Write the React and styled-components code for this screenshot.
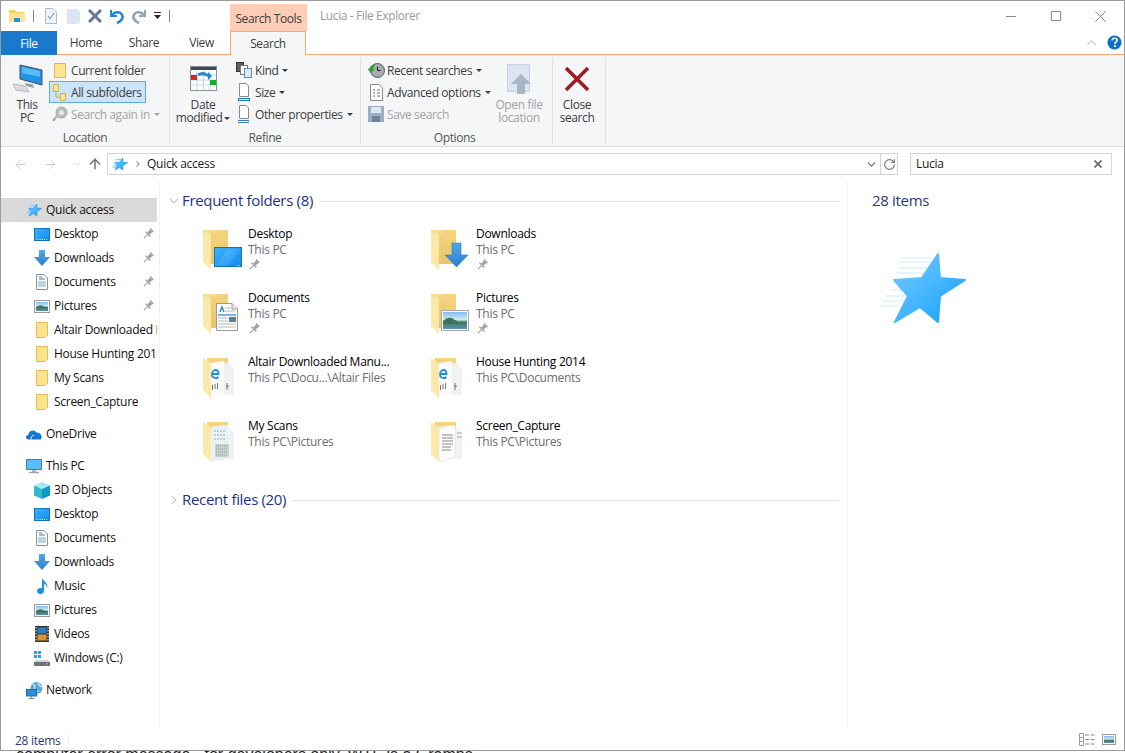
import React from "react";
import styled, { createGlobalStyle } from "styled-components";
import { ArrowLeft, ArrowRight, ArrowUp, ChevronDown, ChevronRight, ChevronUp, RotateCw } from "lucide-react";

const GlobalStyle = createGlobalStyle`
	html, body {
		margin: 0;
		padding: 0;
		background: #fff;
		overflow: hidden;
	}
	body {
		font-family: "Open Sans", "Noto Sans", sans-serif;
		font-size: 12px;
		letter-spacing: -0.28px;
		color: #1a1a1a;
	}
	* {
		box-sizing: border-box;
	}
	svg {
		display: block;
		flex: none;
	}
`;

const Page = styled.div`
	width: 1125px;
	height: 753px;
	display: flex;
	flex-direction: column;
	overflow: hidden;
`;

const Win = styled.div`
	height: 751px;
	flex: none;
	display: flex;
	flex-direction: column;
	background: #fff;
	border: 1px solid #9a9a9a;
`;

const BehindStrip = styled.div`
	height: 2px;
	overflow: hidden;
	background: #fff;
	font-family: "Liberation Sans", sans-serif;
	font-size: 16px;
	line-height: 8px;
	letter-spacing: 0;
	white-space: nowrap;
	padding-left: 16px;
	color: #222;
`;

/* title bar */
const TitleBar = styled.div`
	height: 30px;
	display: flex;
	flex: none;
	letter-spacing: -0.4px;
`;

const Qat = styled.div`
	width: 229px;
	display: flex;
	align-items: center;
	padding-left: 8px;
	height: 30px;
`;

const QatBtn = styled.div`
	width: ${(p) => p.$w || 22}px;
	display: flex;
	justify-content: center;
`;

const QatSep = styled.div`
	width: 1px;
	height: 12px;
	background: #8a8a8a;
	margin: 0 ${(p) => p.$mr || 0}px 0 ${(p) => p.$ml || 0}px;
`;

const ContextTab = styled.div`
	width: 77px;
	margin-top: 3px;
	background: #ffcdb6;
	color: #3c3c3c;
	display: flex;
	align-items: center;
	justify-content: center;
	padding-top: 2px;
`;

const WinTitle = styled.div`
	margin-left: 13px;
	color: #9b9b9b;
	line-height: 30px;
`;

const WinBtns = styled.div`
	margin-left: auto;
	margin-right: 1px;
	display: flex;
`;

const WinBtn = styled.div`
	width: 45px;
	height: 30px;
	display: flex;
	align-items: center;
	justify-content: center;
`;

/* tabs */
const TabBar = styled.div`
	height: 24px;
	flex: none;
	display: flex;
	align-items: stretch;
	border-bottom: 1px solid #f9a76f;
	letter-spacing: -0.4px;
`;

const FileTab = styled.div`
	width: 56px;
	background: #1979ca;
	color: #fff;
	display: flex;
	align-items: center;
	justify-content: center;
	margin-bottom: -1px;
`;

const Tab = styled.div`
	width: ${(p) => p.$w}px;
	display: flex;
	align-items: center;
	justify-content: center;
	color: #3c3c3c;
`;

const ActiveTab = styled.div`
	width: 76px;
	background: #f5f6f7;
	color: #3c3c3c;
	border: 1px solid #f9a76f;
	border-bottom: none;
	margin-bottom: -1px;
	display: flex;
	align-items: center;
	justify-content: center;
`;

const TabTools = styled.div`
	margin-left: auto;
	display: flex;
	align-items: center;
	padding-right: 2px;
	gap: 8px;
`;

/* ribbon */
const Ribbon = styled.div`
	height: 92px;
	flex: none;
	display: flex;
	background: #f5f6f7;
	border-bottom: 1px solid #dadbdc;
	padding-top: 2px;
	color: #3c3c3c;
	letter-spacing: -0.4px;
`;

const Group = styled.div`
	width: ${(p) => p.$w}px;
	height: 87px;
	display: flex;
	flex-direction: column;
	border-right: 1px solid #e2e3e4;
`;

const GroupBody = styled.div`
	flex: 1;
	display: flex;
	padding-left: ${(p) => p.$pl || 0}px;
	padding-top: 2px;
`;

const GroupLabel = styled.div`
	text-align: center;
	line-height: 16px;
	margin-bottom: -2px;
	color: #555;
	padding-right: ${(p) => p.$pr || 0}px;
`;

const BigBtn = styled.div`
	width: ${(p) => p.$w}px;
	flex: none;
	display: flex;
	flex-direction: column;
	align-items: center;
	text-align: center;
	line-height: 13px;
	color: ${(p) => (p.$off ? "#a3a3a3" : "inherit")};
`;

const BigIcon = styled.div`
	height: 39px;
	display: flex;
	align-items: center;
	justify-content: center;
`;

const RowCol = styled.div`
	width: ${(p) => p.$w}px;
	flex: none;
	margin-left: ${(p) => p.$ml || 0}px;
	display: flex;
	flex-direction: column;
`;

const SmallRow = styled.div`
	height: 22px;
	display: flex;
	align-items: center;
	gap: 2px;
	padding-left: 2px;
	white-space: nowrap;
	color: ${(p) => (p.$off ? "#a3a3a3" : "inherit")};
	width: ${(p) => (p.$sel ? "97px" : "auto")};
	background: ${(p) => (p.$sel ? "#cce4f7" : "transparent")};
	outline: ${(p) => (p.$sel ? "1px solid #62a8e0" : "none")};
	outline-offset: -1px;
`;

const RowIcon = styled.div`
	width: 18px;
	flex: none;
	display: flex;
	justify-content: center;
`;

const Caret = styled.span`
	display: inline-block;
	width: 0;
	height: 0;
	border: 3px solid transparent;
	border-top: 3px solid ${(p) => (p.$off ? "#a3a3a3" : "#3c3c3c")};
	border-bottom: none;
	margin-left: 2px;
	vertical-align: 2px;
`;

/* address row */
const AddressRow = styled.div`
	height: 35px;
	flex: none;
	display: flex;
	padding-top: 6px;
	padding-left: 12px;
	align-items: flex-start;
`;

const NavArrows = styled.div`
	width: 94px;
	height: 22px;
	display: flex;
	align-items: center;
`;

const ArrowBox = styled.div`
	width: ${(p) => p.$w}px;
	display: flex;
	justify-content: ${(p) => p.$j || "flex-start"};
`;

const AddressBox = styled.div`
	width: 791px;
	height: 22px;
	border: 1px solid #d5d5d5;
	display: flex;
	align-items: center;
	padding-left: 4px;
	color: #1a1a1a;
`;

const Crumb = styled.span`
	margin-left: 4px;
	padding-bottom: 2px;
`;

const BoxEnd = styled.div`
	margin-left: auto;
	display: flex;
	align-items: center;
	height: 100%;
`;

const BoxCell = styled.div`
	width: ${(p) => p.$w}px;
	height: 100%;
	display: flex;
	align-items: center;
	justify-content: center;
	border-left: ${(p) => (p.$line ? "1px solid #d5d5d5" : "none")};
`;

const SearchBox = styled.div`
	width: 202px;
	height: 22px;
	margin-left: 12px;
	border: 1px solid #d5d5d5;
	display: flex;
	align-items: center;
	justify-content: space-between;
	padding: 0 9px 0 5px;
	color: #1a1a1a;
`;

const SearchText = styled.span`
	padding-bottom: 2px;
`;

/* main area */
const Main = styled.div`
	flex: 1;
	min-height: 0;
	display: flex;
`;

const NavPane = styled.div`
	width: 159px;
	flex: none;
	border-right: 1px solid #f0f0f0;
	padding: 16px 2px 0 0;
`;

const NavRow = styled.div`
	height: 24px;
	display: flex;
	align-items: center;
	gap: 2px;
	padding-left: ${(p) => (p.$child ? 31 : 23)}px;
	background: ${(p) => (p.$sel ? "#d9d9d9" : "transparent")};
	margin-top: ${(p) => (p.$gap ? 8 : 0)}px;
	color: #111;
`;

const NavIcon = styled.div`
	width: 20px;
	flex: none;
	display: flex;
	justify-content: center;
`;

const NavLabel = styled.div`
	flex: 1;
	min-width: 0;
	overflow: hidden;
	white-space: nowrap;
	padding-bottom: 2px;
`;

const PinBox = styled.div`
	width: 15px;
	flex: none;
`;

const Content = styled.div`
	width: 687px;
	flex: none;
	padding: 8px 8px 0;
`;

const SectionHead = styled.div`
	height: 22px;
	display: flex;
	align-items: center;
	margin-top: ${(p) => p.$mt || 0}px;
`;

const SectionTitle = styled.div`
	font-size: 15px;
	letter-spacing: -0.33px;
	color: #1e3287;
	white-space: nowrap;
	margin-left: 3px;
	padding: 0 6px 2px 0;
`;

const SectionLine = styled.div`
	flex: 1;
	height: 1px;
	background: #e2e2e2;
`;

const ChevBox = styled.div`
	width: 11px;
	display: flex;
	justify-content: center;
`;

const Tiles = styled.div`
	display: grid;
	grid-template-columns: 228px 228px;
	grid-auto-rows: 64px;
	margin: 12px 0 0 35px;
`;

const Tile = styled.div`
	display: flex;
	padding-top: 1px;
`;

const TileIcon = styled.div`
	width: 45px;
	flex: none;
	padding-top: 4px;
`;

const TileText = styled.div`
	line-height: 16px;
	white-space: nowrap;
	padding-top: 1px;
`;

const TileName = styled.div`
	color: #000;
`;

const TileSub = styled.div`
	color: #6d6d6d;
`;

const TilePin = styled.div`
	padding-top: 1px;
`;

const Details = styled.div`
	flex: 1;
	border-left: 1px solid #f0f0f0;
	padding: 7px 0 0 24px;
`;

const DetailsCount = styled.div`
	font-size: 15px;
	letter-spacing: -0.33px;
	line-height: 22px;
	color: #2b3a6e;
`;

const DetailsStar = styled.div`
	margin: 41px 0 0 6px;
`;

/* status bar */
const StatusBar = styled.div`
	height: 22px;
	flex: none;
	display: flex;
	align-items: center;
	padding: 0 5px 0 14px;
	color: #2b3a6e;
`;

const StatusText = styled.span`
	padding-top: 2px;
`;

const StatusSep = styled.div`
	width: 1px;
	height: 10px;
	background: #ececec;
	margin-left: 8px;
`;

const StatusIcons = styled.div`
	margin-left: auto;
	display: flex;
	align-items: center;
	gap: 7px;
	padding-right: 3px;
`;

/* drawn icons */
const Defs = () => (
	<svg width="0" height="0" style={{ position: "absolute" }}>
		<defs>
			<linearGradient id="blueGrad" x1="0" y1="0" x2="1" y2="1">
				<stop offset="0" stopColor="#7accff" />
				<stop offset="1" stopColor="#12a0ff" />
			</linearGradient>
			<linearGradient id="screenGrad" x1="0" y1="0" x2="1" y2="1">
				<stop offset="0" stopColor="#3fb2fb" />
				<stop offset="1" stopColor="#0e8bf0" />
			</linearGradient>
			<linearGradient id="folderBack" x1="0" y1="0" x2="0" y2="1">
				<stop offset="0" stopColor="#f3d57f" />
				<stop offset="1" stopColor="#e9c566" />
			</linearGradient>
			<linearGradient id="photoGrad" x1="0" y1="0" x2="0" y2="1">
				<stop offset="0" stopColor="#7fbdf0" />
				<stop offset="0.45" stopColor="#d5e8f4" />
				<stop offset="0.6" stopColor="#3f7a5c" />
				<stop offset="1" stopColor="#5b8fb8" />
			</linearGradient>
			<linearGradient id="arrowGrad" x1="0" y1="0" x2="0" y2="1">
				<stop offset="0" stopColor="#4ea6ea" />
				<stop offset="1" stopColor="#2a80d2" />
			</linearGradient>
		</defs>
	</svg>
);

const StarPoints = "68,15 70,39 95,41 70,57 68,83 50,68 25,83 38,57 24,41 52,39";

const StarLarge = () => (
	<svg width="90" height="74" viewBox="8 13 90 74">
		<g stroke="#cfe9fb" strokeWidth="1.2">
			<path d="M33 19H62M30 23H60M28 29H58M26 34H55" />
			<path d="M20 51H38M15 57H36M12 62H34M10 67H30" />
		</g>
		<polygon points={StarPoints} fill="url(#blueGrad)" stroke="url(#blueGrad)" strokeWidth="2" strokeLinejoin="round" />
	</svg>
);

const StarSmall = () => (
	<svg width="16" height="14" viewBox="8 12 90 74">
		<path d="M28 25H60M16 55H38M12 66H32" stroke="#8ecdf7" strokeWidth="7" />
		<polygon points={StarPoints} fill="url(#blueGrad)" stroke="#2a9cf0" strokeWidth="4" strokeLinejoin="round" />
	</svg>
);

const PinIcon = ({ size = 12 }) => (
	<svg width={size} height={size} viewBox="0 0 12 12">
		<g transform="rotate(45 6 6)" fill="#9aa1a8">
			<rect x="3.6" y="0" width="4.8" height="1.4" />
			<rect x="4.4" y="1.4" width="3.2" height="4" />
			<rect x="2.6" y="5.4" width="6.8" height="1.4" />
			<rect x="5.4" y="6.8" width="1.2" height="5" />
		</g>
	</svg>
);

const FolderBase = () => (
	<>
		<rect x="4" y="1" width="21" height="34" fill="url(#folderBack)" />
		<polygon points="0,1 8,6 8,41 0,33" fill="#fce9a9" />
		<rect x="0" y="1" width="12" height="3" fill="#f5dc8e" />
	</>
);

const DesktopFolder = () => (
	<svg width="45" height="42" viewBox="0 0 45 42">
		<FolderBase />
		<rect x="11.5" y="18.5" width="27" height="19" fill="url(#screenGrad)" stroke="#0f74c4" />
		<path d="M14 36L24 20H36L26 36Z" fill="#fff" opacity="0.1" />
		<path d="M34 36.5H38" stroke="#fff" strokeDasharray="1 1" />
	</svg>
);

const DownloadsFolder = () => (
	<svg width="45" height="42" viewBox="0 0 45 42">
		<FolderBase />
		<path d="M21 14H30V26H37L25.5 38L14 26H21Z" fill="url(#arrowGrad)" stroke="#2a78c8" strokeWidth="0.6" />
	</svg>
);

const DocPage = () => (
	<g>
		<path d="M13.5 10.5H29L34.5 16V37.5H13.5Z" fill="#fff" stroke="#9a9a9a" />
		<path d="M29 10.5V16H34.5" fill="#e8e8e8" stroke="#9a9a9a" />
		<path d="M17 19L19 14L21 19" fill="none" stroke="#2a80d2" strokeWidth="1.4" />
		<path d="M22 15H28M22 18H32" stroke="#b0b8c0" />
		<path d="M15 22H33" stroke="#2a80d2" strokeWidth="1.2" />
		<path d="M15 25H25M15 28H25M15 31H33M15 34H33" stroke="#b8b8b8" />
		<rect x="26" y="24" width="7" height="5" fill="#5f7f90" />
	</g>
);

const DocumentsFolder = () => (
	<svg width="45" height="42" viewBox="0 0 45 42">
		<FolderBase />
		<DocPage />
	</svg>
);

const PicturesFolder = () => (
	<svg width="45" height="42" viewBox="0 0 45 42">
		<FolderBase />
		<rect x="10.5" y="17.5" width="27" height="20" fill="#fff" stroke="#a6a6a6" />
		<rect x="12" y="19" width="24" height="17" fill="url(#photoGrad)" />
		<path d="M12 28Q18 22 24 27T36 30V31H12Z" fill="#3c7458" />
	</svg>
);

const ThumbFolder = ({ kind }) => (
	<svg width="45" height="42" viewBox="0 0 45 42">
		<rect x="4" y="1" width="21" height="33" fill="url(#folderBack)" />
		<polygon points="20,5 26,7 31,12 31,38 20,37" fill="#f1f1f1" />
		<polygon points="8,6 21,4 21,38 8,41" fill="#fbfbfb" />
		<polygon points="0,1 8,6 8,41 0,33" fill="#fce9a9" />
		{kind === "web" && (
			<g>
				<path d="M9.5 17H15.5C15.5 14.5 14 13 12.5 13C10.5 13 9 15 9 17.5C9 20 11 21 13 21C14 21 15 20.5 15.5 20" fill="none" stroke="#1d8fe0" strokeWidth="1.8" />
				<path d="M9.5 28V33M12 27V32M14.5 26V32M24 26V33" stroke="#777" />
				<path d="M23 29H26" stroke="#777" />
			</g>
		)}
		{kind === "scan" && (
			<g>
				<polygon points="8,6 25,4 25,38 8,41" fill="#e6f2f4" />
				<path d="M11 10H23M11 14H23M11 18H23" stroke="#9aa8b0" strokeDasharray="2 1" />
				<rect x="12" y="23" width="14" height="13" fill="#c8d0d0" />
				<path d="M13 25H25M13 28H25M13 31H25M13 34H25" stroke="#909a9e" strokeDasharray="1 1" />
			</g>
		)}
		{kind === "page" && (
			<g>
				<polygon points="8,8 24,4 24,36 8,41" fill="#fdfdfd" stroke="#ddd" strokeWidth="0.5" />
				<path d="M11 14H22M11 17H22M11 20H22M11 23H22M11 26H20M11 29H20" stroke="#8a8a8a" />
				<path d="M26 12H31M26 16H31" stroke="#aaa" />
			</g>
		)}
	</svg>
);

const NavDesktop = () => (
	<svg width="16" height="13" viewBox="0 0 16 13">
		<rect x="0.5" y="0.5" width="15" height="12" fill="url(#screenGrad)" stroke="#0f74c4" />
		<path d="M2 11.5H14" stroke="#cfe8fb" strokeDasharray="1 1" />
	</svg>
);

const NavDownloads = () => (
	<svg width="16" height="16" viewBox="0 0 16 16">
		<path d="M5 0H11V7H16L8 16L0 7H5Z" fill="url(#arrowGrad)" />
	</svg>
);

const NavDocuments = ({ w = 12 }) => (
	<svg width={w} height="16" viewBox="0 0 12 16">
		<path d="M0.5 0.5H8L11.5 4V15.5H0.5Z" fill="#fff" stroke="#8f8f8f" />
		<path d="M3 3H6M3 5H9" stroke="#2a80d2" />
		<path d="M2 8H10M2 10H10M2 12H10" stroke="#7ea4c4" />
	</svg>
);

const NavPictures = () => (
	<svg width="16" height="13" viewBox="0 0 16 13">
		<rect x="0.5" y="0.5" width="15" height="12" fill="#fff" stroke="#9a9a9a" />
		<rect x="2" y="2" width="12" height="9" fill="url(#photoGrad)" />
		<path d="M2 7Q6 4 9 6T14 7V8H2Z" fill="#3c7458" />
	</svg>
);

const NavFolder = () => (
	<svg width="12" height="16" viewBox="0 0 12 16">
		<path d="M0.5 0.5H11.5V13L9 15.5H0.5Z" fill="#ffe28c" stroke="#e0bd52" />
		<path d="M9.5 13V15.5L11.5 13Z" fill="#f0cf6e" />
	</svg>
);

const NavOneDrive = () => (
	<svg width="16" height="11" viewBox="0 0 16 11">
		<path d="M2.5 10.5C0.8 10.5 0 9.3 0 8.2C0 7 .9 6 2.2 5.9C2.6 3.4 4.5 1.5 6.8 1.5C8.3 1.5 9.6 2.3 10.3 3.5C12.8 3.2 15 4.7 15.4 7C16.2 8.6 15.2 10.5 13.4 10.5Z" fill="#1277c9" />
		<path d="M5 10.5C4.6 8.4 6 6.6 8 6.3" fill="none" stroke="#fff" strokeWidth="1" />
	</svg>
);

const NavThisPc = () => (
	<svg width="16" height="15" viewBox="0 0 16 15">
		<rect x="0.5" y="0.5" width="15" height="10" fill="#56bdf7" stroke="#4a7ea8" />
		<path d="M6 11H10V13H6Z" fill="#a8b8c4" />
		<path d="M3 13.5H13" stroke="#8fa2b2" strokeWidth="1.4" />
	</svg>
);

const Nav3D = () => (
	<svg width="16" height="17" viewBox="0 0 16 17">
		<polygon points="8,0 16,3.5 8,7 0,3.5" fill="#9eeaf0" />
		<polygon points="0,3.5 8,7 8,17 0,13.5" fill="#2fbcd0" />
		<polygon points="16,3.5 8,7 8,17 16,13.5" fill="#1098c4" />
	</svg>
);

const NavMusic = () => (
	<svg width="11" height="16" viewBox="0 0 11 16">
		<ellipse cx="3.5" cy="13" rx="3.4" ry="3" fill="#1e90e8" />
		<path d="M5 13V0C6 3 11 4.5 10.5 10C9.6 7 8 6 7 5.5V13Z" fill="#1e90e8" />
	</svg>
);

const NavVideos = () => (
	<svg width="14" height="16" viewBox="0 0 14 16">
		<rect width="14" height="16" fill="#333" />
		<path d="M1 1V15M13 1V15" stroke="#ddd" strokeWidth="1.2" strokeDasharray="1.5 1.5" />
		<rect x="2.5" y="1.5" width="9" height="6" fill="#2a80c8" />
		<rect x="2.5" y="8.5" width="9" height="6" fill="#d89a30" />
	</svg>
);

const NavDrive = () => (
	<svg width="16" height="15" viewBox="0 0 16 15">
		<rect x="0" y="0" width="3" height="3" fill="#1ea5ee" />
		<rect x="4" y="0" width="3" height="3" fill="#1ea5ee" />
		<rect x="0" y="4" width="3" height="3" fill="#1ea5ee" />
		<rect x="4" y="4" width="3" height="3" fill="#1ea5ee" />
		<polygon points="2,9 14,9 16,11 0,11" fill="#d2d6d8" />
		<rect x="0" y="11" width="16" height="4" fill="#6f7478" />
		<rect x="12" y="12" width="2" height="1.4" fill="#49e05a" />
	</svg>
);

const NavNetwork = () => (
	<svg width="17" height="17" viewBox="0 0 17 17">
		<circle cx="10.5" cy="6" r="6" fill="#5aa5e0" />
		<path d="M7 2Q10 4 8 7T13 9M12 1Q13 4 16 5" fill="none" stroke="#d6ecfa" strokeWidth="1.2" />
		<rect x="0.5" y="7.5" width="10" height="6.5" fill="#2f8fdc" stroke="#24689e" />
		<path d="M5.5 14V16.5M2.5 16.5H8.5" stroke="#7a8c9a" />
	</svg>
);

const RibbonPc = () => (
	<svg width="32" height="30" viewBox="0 0 32 30">
		<polygon points="9,1 31,6 31,21 9,15" fill="#1f94e8" stroke="#4a4f55" />
		<polygon points="11,3 29,7 29,13 11,9" fill="#58baf6" />
		<polygon points="14,19 22,20.5 23,24 15,22" fill="#9aa0a6" />
		<polygon points="2,20 14,22 18,28 5,26" fill="#dadcdf" stroke="#b6b9bd" />
	</svg>
);

const RibbonFolder = () => (
	<svg width="12" height="15" viewBox="0 0 12 15">
		<path d="M0.5 0.5H11.5V14.5H0.5Z" fill="#ffe491" stroke="#dcb84e" />
	</svg>
);

const RibbonSubfolders = () => (
	<svg width="14" height="17" viewBox="0 0 14 17">
		<path d="M0.5 0.5H5.5V7.5H0.5Z" fill="#ffe491" stroke="#d3ae42" />
		<path d="M7.5 9.5H12.5V16.5H7.5Z" fill="#ffe491" stroke="#d3ae42" />
		<path d="M3 8V13H7" fill="none" stroke="#c9a94a" />
	</svg>
);

const RibbonSearchAgain = () => (
	<svg width="16" height="16" viewBox="0 0 16 16">
		<circle cx="9.5" cy="6.5" r="5.5" fill="#bcbcbc" stroke="#a3a3a3" />
		<circle cx="9.5" cy="6.5" r="2.5" fill="#e8e8e8" />
		<path d="M5 10L1 15" stroke="#b2b2b2" strokeWidth="2.5" />
	</svg>
);

const RibbonCalendar = () => (
	<svg width="27" height="25" viewBox="0 0 27 25">
		<rect x="0.5" y="0.5" width="26" height="24" fill="#fff" stroke="#8a8f94" />
		<rect x="1" y="1" width="25" height="3" fill="#3e4a54" />
		<path d="M1 9H26M1 14H26M1 19H26M7 5V24M13.5 5V24M20 5V24" stroke="#bcd6e8" />
		<rect x="1" y="9" width="6" height="5" fill="#d8261f" />
		<rect x="20" y="14" width="6" height="5" fill="#12b02c" />
		<path d="M7 8Q13 4 18 8V6L22 10L18 14V11Q13 8 9 10Z" fill="#2a86d4" />
	</svg>
);

const RibbonKind = () => (
	<svg width="16" height="16" viewBox="0 0 16 16">
		<rect x="0.5" y="0.5" width="7" height="9" fill="#5a6066" stroke="#333" />
		<rect x="4.5" y="3.5" width="7" height="9" fill="#fff" stroke="#777" />
		<rect x="8.5" y="6.5" width="7" height="9" fill="#d8ecfa" stroke="#6f8ba3" />
	</svg>
);

const RibbonPageLine = ({ thin }) => (
	<svg width="12" height="18" viewBox="0 0 12 18">
		<path d="M1.5 0.5H8L10.5 3V13.5H1.5Z" fill="#fff" stroke="#8a8a8a" />
		{thin ? (
			<path d="M0 15.5H11M0 17.5H11" stroke="#3a7cc2" />
		) : (
			<g>
				<path d="M0 15.5H11" stroke="#1e7ac8" strokeWidth="1" />
				<rect x="0.5" y="15.5" width="11" height="2" fill="#d6e8f6" stroke="#1e7ac8" />
			</g>
		)}
	</svg>
);

const RibbonRecent = () => (
	<svg width="17" height="15" viewBox="0 0 17 15">
		<circle cx="9.5" cy="7.5" r="7" fill="#a8acb0" stroke="#55595d" />
		<path d="M9.5 3.5V7.5H12.5" fill="none" stroke="#222" />
		<path d="M0 6L3 9.5L6 6H4.5C5 3 7 2 7 2C4 2 2 3.5 1.6 6Z" fill="#2ca52e" stroke="#1f7d22" strokeWidth="0.5" />
	</svg>
);

const RibbonAdvanced = () => (
	<svg width="13" height="17" viewBox="0 0 13 17">
		<path d="M0.5 0.5H9L12.5 4V16.5H0.5Z" fill="#fff" stroke="#8a8a8a" />
		<path d="M3 6H5M7 6H10M3 9H5M7 9H10M3 12H5M7 12H10" stroke="#6a6a6a" />
	</svg>
);

const RibbonSave = () => (
	<svg width="16" height="16" viewBox="0 0 16 16">
		<rect width="16" height="16" fill="#9aaec6" />
		<rect x="3" y="1" width="10" height="6" fill="#dfe6ee" />
		<rect x="4" y="10" width="8" height="6" fill="#6f8299" />
	</svg>
);

const RibbonOpenLocation = () => (
	<svg width="25" height="30" viewBox="0 0 25 30">
		<rect x="0.5" y="0.5" width="22" height="27" fill="#dbe5f1" stroke="#c6d2e2" />
		<path d="M14 10L24 20H18V30H10V20H4Z" fill="#a6b4c4" />
	</svg>
);

const RibbonClose = () => (
	<svg width="26" height="26" viewBox="0 0 26 26">
		<path d="M2 2L24 24M24 2L2 24" stroke="#9e1c22" strokeWidth="3.6" />
	</svg>
);

const QatFolder = () => (
	<svg width="17" height="14" viewBox="0 0 17 14">
		<path d="M0 1H6L8 3H15V13H0Z" fill="#f4cf6b" />
		<rect x="0" y="4" width="16" height="9" fill="#ffe390" />
		<rect x="5" y="9" width="6" height="4" fill="#2093e0" />
	</svg>
);

const QatProps = () => (
	<svg width="12" height="16" viewBox="0 0 12 16">
		<path d="M0.5 0.5H8L11.5 4V15.5H0.5Z" fill="#edf3f9" stroke="#aebcce" />
		<path d="M3 8L5 10.5L9 5" fill="none" stroke="#8aa0b8" strokeWidth="1.2" />
	</svg>
);

const QatNew = () => (
	<svg width="13" height="15" viewBox="0 0 13 15">
		<path d="M0 0H10L13 3V15H0Z" fill="#dbe5f1" />
		<path d="M10 12V15H13Z" fill="#f5f5f5" />
	</svg>
);

const QatX = () => (
	<svg width="14" height="14" viewBox="0 0 14 14">
		<path d="M1 1L13 13M13 1L1 13" stroke="#64799a" strokeWidth="3" />
	</svg>
);

const QatUndo = ({ color, flip }) => (
	<svg width="14" height="15" viewBox="0 0 14 15" style={flip ? { transform: "scaleX(-1)" } : undefined}>
		<path d="M1 1V7H7" fill="none" stroke={color} strokeWidth="2.2" />
		<path d="M2 6.5C4 3 9 2 11.5 5C14 8 12 12 7 14" fill="none" stroke={color} strokeWidth="2.6" />
	</svg>
);

const QatMore = () => (
	<svg width="8" height="8" viewBox="0 0 8 8">
		<path d="M0 0.5H7" stroke="#222" />
		<path d="M0 3H7L3.5 7Z" fill="#222" />
	</svg>
);

const WinMin = () => (
	<svg width="10" height="10" viewBox="0 0 10 10">
		<path d="M0 5.5H10" stroke="#8a8a8a" />
	</svg>
);

const WinMax = () => (
	<svg width="10" height="10" viewBox="0 0 10 10">
		<rect x="0.5" y="0.5" width="9" height="9" fill="none" stroke="#8a8a8a" />
	</svg>
);

const ThinX = () => (
	<svg width="11" height="11" viewBox="0 0 11 11">
		<path d="M0.5 0.5L10.5 10.5M10.5 0.5L0.5 10.5" stroke="#8a8a8a" />
	</svg>
);

const SearchClear = () => (
	<svg width="8" height="8" viewBox="0 0 8 8">
		<path d="M0.5 0.5L7.5 7.5M7.5 0.5L0.5 7.5" stroke="#666" strokeWidth="1.6" />
	</svg>
);

const HelpIcon = () => (
	<svg width="15" height="15" viewBox="0 0 15 15">
		<circle cx="7.5" cy="7.5" r="7" fill="#0a6fc8" />
		<path d="M5 5.4C5.2 3.8 6.2 3.2 7.6 3.2C9.2 3.2 10.1 4 10.1 5.3C10.1 7 7.9 7 7.9 9" fill="none" stroke="#fff" strokeWidth="1.6" />
		<rect x="7" y="10.2" width="1.8" height="1.8" fill="#fff" />
	</svg>
);

const DetailsViewIcon = () => (
	<svg width="16" height="13" viewBox="0 0 16 13">
		<path d="M0.5 0.5H4.5V12.5H0.5ZM0.5 4.5H4.5M0.5 8.5H4.5" fill="none" stroke="#9a9a9a" />
		<path d="M6 2H10M11.5 2H15.5M6 6.5H10M11.5 6.5H15.5M6 11H10M11.5 11H15.5" stroke="#8a8a8a" />
	</svg>
);

const TilesViewIcon = () => (
	<svg width="14" height="11" viewBox="0 0 14 11">
		<rect x="0.5" y="0.5" width="13" height="10" fill="#fff" stroke="#9a9a9a" />
		<rect x="2" y="2" width="10" height="7" fill="url(#photoGrad)" />
	</svg>
);

const quickItems = [
	{ label: "Desktop", icon: <NavDesktop />, pin: true },
	{ label: "Downloads", icon: <NavDownloads />, pin: true },
	{ label: "Documents", icon: <NavDocuments />, pin: true },
	{ label: "Pictures", icon: <NavPictures />, pin: true },
	{ label: "Altair Downloaded Manuals", icon: <NavFolder /> },
	{ label: "House Hunting 2014", icon: <NavFolder /> },
	{ label: "My Scans", icon: <NavFolder /> },
	{ label: "Screen_Capture", icon: <NavFolder /> },
];

const pcItems = [
	{ label: "3D Objects", icon: <Nav3D /> },
	{ label: "Desktop", icon: <NavDesktop /> },
	{ label: "Documents", icon: <NavDocuments /> },
	{ label: "Downloads", icon: <NavDownloads /> },
	{ label: "Music", icon: <NavMusic /> },
	{ label: "Pictures", icon: <NavPictures /> },
	{ label: "Videos", icon: <NavVideos /> },
	{ label: "Windows (C:)", icon: <NavDrive /> },
];

const tiles = [
	{ name: "Desktop", sub: "This PC", icon: <DesktopFolder />, pin: true },
	{ name: "Downloads", sub: "This PC", icon: <DownloadsFolder />, pin: true },
	{ name: "Documents", sub: "This PC", icon: <DocumentsFolder />, pin: true },
	{ name: "Pictures", sub: "This PC", icon: <PicturesFolder />, pin: true },
	{ name: "Altair Downloaded Manu...", sub: "This PC\\Docu...\\Altair Files", icon: <ThumbFolder kind="web" /> },
	{ name: "House Hunting 2014", sub: "This PC\\Documents", icon: <ThumbFolder kind="web" /> },
	{ name: "My Scans", sub: "This PC\\Pictures", icon: <ThumbFolder kind="scan" /> },
	{ name: "Screen_Capture", sub: "This PC\\Pictures", icon: <ThumbFolder kind="page" /> },
];

const NavItem = ({ item, child }) => (
	<NavRow $child={child}>
		<NavIcon>{item.icon}</NavIcon>
		<NavLabel>{item.label}</NavLabel>
		{item.pin && (
			<PinBox>
				<PinIcon />
			</PinBox>
		)}
	</NavRow>
);

const App = () => {
	return (
		<Page>
			<GlobalStyle />
			<Defs />
			<Win>
				<TitleBar>
					<Qat>
						<QatFolder />
						<QatSep $ml={7} $mr={6} />
						<QatBtn $w={22}>
							<QatProps />
						</QatBtn>
						<QatBtn $w={22}>
							<QatNew />
						</QatBtn>
						<QatBtn $w={22}>
							<QatX />
						</QatBtn>
						<QatBtn $w={22}>
							<QatUndo color="#1f86d8" />
						</QatBtn>
						<QatBtn $w={22}>
							<QatUndo color="#8ea3bd" flip />
						</QatBtn>
						<QatBtn $w={16}>
							<QatMore />
						</QatBtn>
						<QatSep $ml={3} />
					</Qat>
					<ContextTab>Search Tools</ContextTab>
					<WinTitle>Lucia - File Explorer</WinTitle>
					<WinBtns>
						<WinBtn>
							<WinMin />
						</WinBtn>
						<WinBtn>
							<WinMax />
						</WinBtn>
						<WinBtn>
							<ThinX />
						</WinBtn>
					</WinBtns>
				</TitleBar>

				<TabBar>
					<FileTab>File</FileTab>
					<Tab $w={58}>Home</Tab>
					<Tab $w={58}>Share</Tab>
					<Tab $w={57}>View</Tab>
					<ActiveTab>Search</ActiveTab>
					<TabTools>
						<ChevronUp size={15} color="#a0a0a0" strokeWidth={1.4} />
						<HelpIcon />
					</TabTools>
				</TabBar>

				<Ribbon>
					<Group $w={169}>
						<GroupBody $pl={2}>
							<BigBtn $w={48}>
								<BigIcon>
									<RibbonPc />
								</BigIcon>
								This
								<br />
								PC
							</BigBtn>
							<RowCol $w={110} $ml={-2}>
								<SmallRow>
									<RowIcon>
										<RibbonFolder />
									</RowIcon>
									Current folder
								</SmallRow>
								<SmallRow $sel>
									<RowIcon>
										<RibbonSubfolders />
									</RowIcon>
									All subfolders
								</SmallRow>
								<SmallRow $off>
									<RowIcon>
										<RibbonSearchAgain />
									</RowIcon>
									Search again in
									<Caret $off />
								</SmallRow>
							</RowCol>
						</GroupBody>
						<GroupLabel>Location</GroupLabel>
					</Group>

					<Group $w={191}>
						<GroupBody $pl={3}>
							<BigBtn $w={60}>
								<BigIcon>
									<RibbonCalendar />
								</BigIcon>
								Date
								<br />
								<span>
									modified
									<Caret />
								</span>
							</BigBtn>
							<RowCol $w={124}>
								<SmallRow>
									<RowIcon>
										<RibbonKind />
									</RowIcon>
									Kind
									<Caret />
								</SmallRow>
								<SmallRow>
									<RowIcon>
										<RibbonPageLine />
									</RowIcon>
									Size
									<Caret />
								</SmallRow>
								<SmallRow>
									<RowIcon>
										<RibbonPageLine thin />
									</RowIcon>
									Other properties
									<Caret />
								</SmallRow>
							</RowCol>
						</GroupBody>
						<GroupLabel>Refine</GroupLabel>
					</Group>

					<Group $w={192}>
						<GroupBody $pl={4}>
							<RowCol $w={124}>
								<SmallRow>
									<RowIcon>
										<RibbonRecent />
									</RowIcon>
									Recent searches
									<Caret />
								</SmallRow>
								<SmallRow>
									<RowIcon>
										<RibbonAdvanced />
									</RowIcon>
									Advanced options
									<Caret />
								</SmallRow>
								<SmallRow $off>
									<RowIcon>
										<RibbonSave />
									</RowIcon>
									Save search
								</SmallRow>
							</RowCol>
							<BigBtn $w={60} $off>
								<BigIcon>
									<RibbonOpenLocation />
								</BigIcon>
								Open file
								<br />
								location
							</BigBtn>
						</GroupBody>
						<GroupLabel $pr={4}>Options</GroupLabel>
					</Group>

					<Group $w={53}>
						<GroupBody>
							<BigBtn $w={48}>
								<BigIcon>
									<RibbonClose />
								</BigIcon>
								Close
								<br />
								search
							</BigBtn>
						</GroupBody>
					</Group>
				</Ribbon>

				<AddressRow>
					<NavArrows>
						<ArrowBox $w={30}>
							<ArrowLeft size={15} color="#cfcfcf" strokeWidth={1.6} />
						</ArrowBox>
						<ArrowBox $w={24}>
							<ArrowRight size={15} color="#cfcfcf" strokeWidth={1.6} />
						</ArrowBox>
						<ArrowBox $w={20} $j="center">
							<ChevronDown size={10} color="#cfcfcf" strokeWidth={2} />
						</ArrowBox>
						<ArrowBox $w={20}>
							<ArrowUp size={16} color="#6f6f6f" strokeWidth={2.2} />
						</ArrowBox>
					</NavArrows>
					<AddressBox>
						<StarSmall />
						<ChevronRight size={10} color="#6f6f6f" strokeWidth={2.4} style={{ marginLeft: 5 }} />
						<Crumb>Quick access</Crumb>
						<BoxEnd>
							<BoxCell $w={17}>
								<ChevronDown size={13} color="#666" strokeWidth={2.2} />
							</BoxCell>
							<BoxCell $w={17} $line>
								<RotateCw size={13} color="#777" strokeWidth={2} />
							</BoxCell>
						</BoxEnd>
					</AddressBox>
					<SearchBox>
						<SearchText>Lucia</SearchText>
						<SearchClear />
					</SearchBox>
				</AddressRow>

				<Main>
					<NavPane>
						<NavRow $sel>
							<NavIcon>
								<StarSmall />
							</NavIcon>
							<NavLabel>Quick access</NavLabel>
						</NavRow>
						{quickItems.map((item) => (
							<NavItem key={item.label} item={item} child />
						))}
						<NavRow $gap>
							<NavIcon>
								<NavOneDrive />
							</NavIcon>
							<NavLabel>OneDrive</NavLabel>
						</NavRow>
						<NavRow $gap>
							<NavIcon>
								<NavThisPc />
							</NavIcon>
							<NavLabel>This PC</NavLabel>
						</NavRow>
						{pcItems.map((item) => (
							<NavItem key={item.label} item={item} child />
						))}
						<NavRow $gap>
							<NavIcon>
								<NavNetwork />
							</NavIcon>
							<NavLabel>Network</NavLabel>
						</NavRow>
					</NavPane>

					<Content>
						<SectionHead>
							<ChevBox>
								<ChevronDown size={14} color="#8a8a8a" strokeWidth={1.3} />
							</ChevBox>
							<SectionTitle>Frequent folders (8)</SectionTitle>
							<SectionLine />
						</SectionHead>
						<Tiles>
							{tiles.map((t) => (
								<Tile key={t.name}>
									<TileIcon>{t.icon}</TileIcon>
									<TileText>
										<TileName>{t.name}</TileName>
										<TileSub>{t.sub}</TileSub>
										{t.pin && (
											<TilePin>
												<PinIcon />
											</TilePin>
										)}
									</TileText>
								</Tile>
							))}
						</Tiles>
						<SectionHead $mt={9}>
							<ChevBox>
								<ChevronRight size={14} color="#8a8a8a" strokeWidth={1.3} />
							</ChevBox>
							<SectionTitle>Recent files (20)</SectionTitle>
							<SectionLine />
						</SectionHead>
					</Content>

					<Details>
						<DetailsCount>28 items</DetailsCount>
						<DetailsStar>
							<StarLarge />
						</DetailsStar>
					</Details>
				</Main>

				<StatusBar>
					<StatusText>28 items</StatusText>
					<StatusSep />
					<StatusIcons>
						<DetailsViewIcon />
						<TilesViewIcon />
					</StatusIcons>
				</StatusBar>
			</Win>
			<BehindStrip>computer error message - for developers only. WTF is a Gramps</BehindStrip>
		</Page>
	);
};

export default App;
